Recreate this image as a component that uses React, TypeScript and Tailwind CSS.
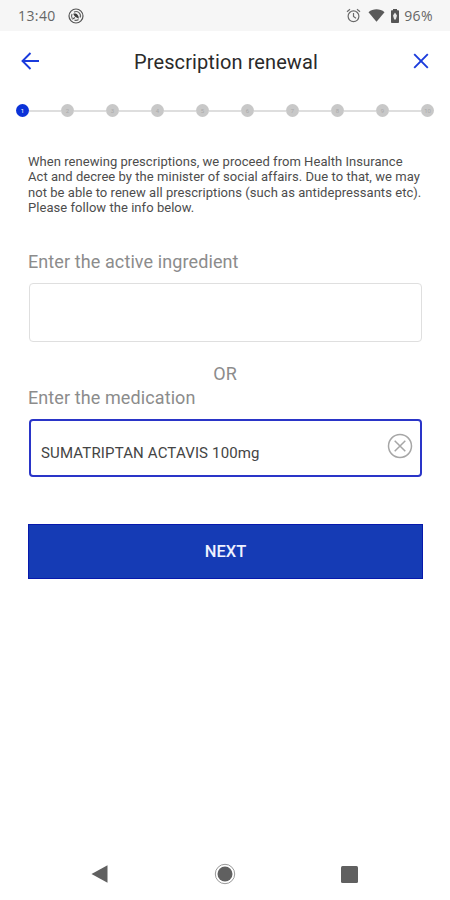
import React, { useState } from 'react';

const STEPS = [1, 2, 3, 4, 5, 6, 7, 8, 9, 10];

const INFO_LINES = [
  'When renewing prescriptions, we proceed from Health Insurance',
  'Act and decree by the minister of social affairs. Due to that, we may',
  'not be able to renew all prescriptions (such as antidepressants etc).',
  'Please follow the info below.',
];

const StatusBar: React.FC = () => (
  <div className="flex h-[31px] items-center bg-[#f6f6f6] pl-[18px] pr-[17px] text-[#666666]">
    <span className="font-['Open_Sans',sans-serif] text-[14px] leading-none tracking-[0.4px]">13:40</span>
    <svg className="ml-[12px]" width="16" height="16" viewBox="0 0 16 16" fill="none">
      <circle cx="8" cy="8" r="7" stroke="#555" strokeWidth="1.2" />
      <path d="M4.200 10.400A4.400 4.400 0 0 1 4 6M6 4.100A4.400 4.400 0 0 1 12.200 9.500M10.500 11.600A4.400 4.400 0 0 1 6.500 12.100" stroke="#666" strokeWidth="1.2" />
      <path d="M5.200 5.800C8 4.600 11 6.800 10.800 10.800L8.600 9.400C7.300 9 6 7.800 5.200 5.800z" fill="#3c3c3c" />
      <path d="M4.300 11.300l2.700-1.900" stroke="#555" strokeWidth="1.2" />
    </svg>
    <div className="ml-auto flex items-center">
      <svg width="15" height="15" viewBox="0 0 15 15" fill="none" stroke="#6b6b6b" strokeWidth="1.2">
        <circle cx="7.500" cy="8.300" r="5.400" />
        <path d="M7.500 5v3.500l2.500 1.700M1 3.700L4 1.200M14 3.700L11 1.200" />
      </svg>
      <svg className="ml-[7px]" width="17" height="13" viewBox="0 0 17 13">
        <path d="M8.500 12.800L0.500 3.200C5 -0.600 12 -0.600 16.500 3.200z" fill="#5a5a5a" />
      </svg>
      <svg className="ml-[5px]" width="10" height="14" viewBox="0 0 10 14">
        <path d="M3 0h4v1.300h1.200q.8 0 .8.800v11q0 .9-.8.900H1.800q-.8 0-.8-.9v-11q0-.8.800-.8H3z" fill="#555" />
        <path d="M5 3.500L7 6.500L5.800 10.500H4.200L3 6.500z" fill="#e8e8e8" />
      </svg>
      <span className="ml-[4px] font-['Open_Sans',sans-serif] text-[14px] leading-none tracking-[0.4px]">96%</span>
    </div>
  </div>
);

const Header: React.FC = () => (
  <header className="flex h-[61px] items-center justify-between pl-[20px] pr-[22px]">
    <button aria-label="Back" className="ml-px -mt-[2px]">
      <svg width="19" height="18" viewBox="0 0 19 18" fill="none" stroke="#1a3bdc" strokeWidth="1.900">
        <path d="M18 9H1.800M9.500 1L1.500 9l8 8" />
      </svg>
    </button>
    <h1 className="whitespace-nowrap text-[20px] leading-none tracking-[0.1px] text-[#2a2a2a]">Prescription renewal</h1>
    <button aria-label="Close" className="-mr-px -mt-[2px]">
      <svg width="17" height="16" viewBox="0 0 17 16" fill="none" stroke="#1a3bdc" strokeWidth="1.900">
        <path d="M2.200 1.200l13.600 13.600M15.800 1.200L2.200 14.800" />
      </svg>
    </button>
  </header>
);

const Stepper: React.FC<{ current: number }> = ({ current }) => (
  <div className="mt-[12px] flex h-[13px] items-center pl-[16px]">
    {STEPS.map((step) => (
      <React.Fragment key={step}>
        {step > 1 && <div className="h-[2px] w-[32px] bg-[#dedede]" />}
        <div
          className={`flex size-[13px] items-center justify-center rounded-full text-[6px] leading-none ${
            step === current ? 'bg-[#0b32d8] text-white' : 'bg-[#c8c8c8] text-[#aaaaaa]'
          }`}
        >
          {step}
        </div>
      </React.Fragment>
    ))}
  </div>
);

const App: React.FC = () => {
  const [ingredient, setIngredient] = useState('');
  const [medication, setMedication] = useState('SUMATRIPTAN ACTAVIS 100mg');

  return (
    <div className="flex h-[900px] w-[450px] flex-col overflow-hidden bg-white font-['Roboto',sans-serif]">
      <StatusBar />
      <Header />
      <Stepper current={1} />

      <main className="flex flex-col px-[28px] pt-[37px]">
        <p className="whitespace-nowrap text-[13px] leading-[15.300px] tracking-[0.045px] text-[#4d4d4d]">
          {INFO_LINES.map((line) => (
            <span key={line} className="block">
              {line}
            </span>
          ))}
        </p>

        <label className="mt-[35px] text-[18px] leading-[24px] tracking-[0.1px] text-[#8c8c8c]">
          Enter the active ingredient
        </label>
        <input
          className="ml-px mt-[9px] h-[59px] w-[393px] rounded-[4px] border border-[#dfdfdf] px-3 outline-none"
          value={ingredient}
          onChange={(e) => setIngredient(e.target.value)}
        />

        <div className="mt-[20px] text-center text-[18px] leading-[24px] text-[#8c8c8c]">OR</div>
        <label className="text-[18px] leading-[24px] tracking-[0.1px] text-[#8c8c8c]">Enter the medication</label>
        <div className="ml-px mt-[9px] flex h-[58px] w-[393px] items-center rounded-[4px] border-2 border-[#2a35c8] pl-[10px] pr-[7px]">
          <input
            className="mt-[9px] min-w-0 flex-1 text-[15px] leading-5 tracking-[0.15px] text-[#444444] outline-none"
            value={medication}
            onChange={(e) => setMedication(e.target.value)}
          />
          <button aria-label="Clear" className="-mt-[4px]" onClick={() => setMedication('')}>
            <svg width="26" height="26" viewBox="0 0 26 26" fill="none" stroke="#a6a6a6" strokeWidth="1.500">
              <circle cx="13" cy="13" r="11.500" />
              <path d="M7.700 7.700l10.600 10.600M18.300 7.700L7.700 18.300" />
            </svg>
          </button>
        </div>

        <button className="mt-[47px] h-[55px] w-[395px] border border-[#0719ac] bg-[#153bb5] pt-px text-[16.500px] font-medium text-[#eef2ff]">
          NEXT
        </button>
      </main>

      <nav className="mt-auto flex h-[52px] items-center justify-between pl-[91px] pr-[92px]">
        <svg width="17" height="18" viewBox="0 0 17 18">
          <path d="M16.500 0.200v17.600L0.500 9z" fill="#606060" />
        </svg>
        <svg width="22" height="22" viewBox="0 0 22 22">
          <circle cx="11" cy="11" r="9.700" fill="none" stroke="#999" strokeWidth="1" />
          <circle cx="11" cy="11" r="7.500" fill="#606060" />
        </svg>
        <svg width="17" height="17" viewBox="0 0 17 17">
          <rect width="17" height="17" rx="1.500" fill="#606060" />
        </svg>
      </nav>
    </div>
  );
};

export default App;
